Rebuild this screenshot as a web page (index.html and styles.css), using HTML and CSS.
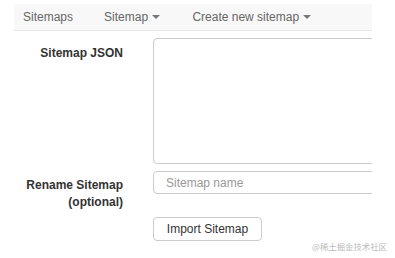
FILE: index.html
```html
<!DOCTYPE html>
<html lang="en">
<head>
    <meta charset="UTF-8">
    <meta name="viewport" content="width=device-width, initial-scale=1.0">
    <title>Import sitemap</title>
    <link rel="stylesheet" href="styles.css">
</head>
<body>
    <div class="page">
        <nav class="navbar">
            <a class="nav-link" href="#">Sitemaps</a>
            <a class="nav-link" href="#">Sitemap <span class="caret"></span></a>
            <a class="nav-link" href="#">Create new sitemap <span class="caret"></span></a>
        </nav>

        <form class="import-form">
            <div class="form-row">
                <label class="form-label" for="sitemap-json">Sitemap JSON</label>
                <textarea id="sitemap-json" class="form-control json-input"></textarea>
            </div>
            <div class="form-row">
                <label class="form-label" for="sitemap-name">Rename Sitemap<br>(optional)</label>
                <input id="sitemap-name" class="form-control name-input" type="text" placeholder="Sitemap name">
            </div>
            <div class="form-row">
                <span></span>
                <div>
                    <button type="button" class="btn">Import Sitemap</button>
                </div>
            </div>
        </form>
    </div>

    <div class="watermark">@稀土掘金技术社区</div>
</body>
</html>
```

FILE: styles.css
```css
body {
    margin: 0;
    background: #fff;
    font-family: 'Liberation Sans', Arial, sans-serif;
    font-size: 12px;
    line-height: 17px;
    color: #333;
}

.page {
    width: 372px;
    overflow: hidden;
    padding-top: 4px;
}

.navbar {
    margin-left: 14px;
    height: 26px;
    display: flex;
    align-items: center;
    background: #f8f8f8;
    border-bottom: 1px solid #e7e7e7;
    white-space: nowrap;
}

.nav-link {
    padding: 0 16px;
    color: #666;
    text-decoration: none;
}

.nav-link:first-child {
    padding-left: 9px;
    padding-right: 15px;
}

.caret {
    display: inline-block;
    width: 0;
    height: 0;
    margin-left: 1px;
    vertical-align: middle;
    border-top: 4px solid #777;
    border-left: 4px solid transparent;
    border-right: 4px solid transparent;
}

.import-form {
    margin-top: 7px;
    padding-left: 14px;
}

.form-row {
    display: grid;
    grid-template-columns: 109px 1fr;
    column-gap: 30px;
    align-items: start;
    margin-bottom: 7px;
}

/* the two-line label makes this row taller than its input */
.form-row:nth-child(2) {
    margin-bottom: 6px;
}

.form-label {
    text-align: right;
    font-weight: bold;
    padding-top: 7px;
}

.form-row:nth-child(2) .form-label {
    padding-top: 6px;
}

.form-control {
    box-sizing: border-box;
    width: 320px;
    border: 1px solid #ccc;
    border-radius: 4px;
    background: #fff;
    font-family: inherit;
    font-size: 12px;
    color: #555;
    margin: 0;
}

.json-input {
    display: block;
    height: 126px;
    resize: none;
    padding: 6px 12px;
}

.name-input {
    display: block;
    height: 23px;
    padding: 0 12px;
}

.name-input::placeholder {
    color: #999;
}

.btn {
    display: block;
    height: 24px;
    width: 109px;
    padding: 0;
    border: 1px solid #ccc;
    border-radius: 4px;
    background: #fff;
    color: #333;
    font-family: inherit;
    font-size: 12px;
}

.watermark {
    position: absolute;
    right: 8px;
    top: 241px;
    font-family: 'Noto Sans CJK SC', sans-serif;
    font-size: 8.4px;
    line-height: 10px;
    color: #bbb;
}
```
